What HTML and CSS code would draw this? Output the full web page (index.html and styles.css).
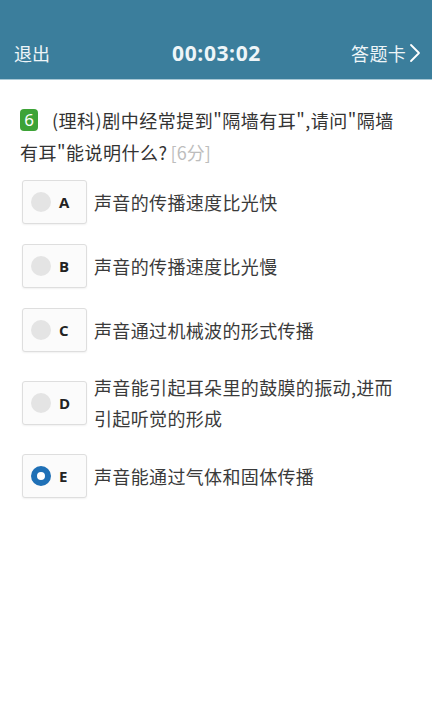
FILE: index.html
```html
<!DOCTYPE html>
<html lang="zh-CN">
<head>
<meta charset="utf-8">
<title>答题</title>
<link rel="stylesheet" href="styles.css">
</head>
<body>
<header class="topbar">
  <span class="exit">退出</span>
  <span class="timer">00:03:02</span>
  <span class="card">答题卡<svg class="chev" width="12" height="20" viewBox="0 0 12 20"><polyline points="2,2 10,10 2,18" fill="none" stroke="#ffffff" stroke-width="1.8" stroke-linecap="round" stroke-linejoin="round"/></svg></span>
</header>
<main class="content">
  <p class="question"><span class="num">6</span>(理科)剧中经常提到"隔墙有耳",请问"隔墙有耳"能说明什么?<span class="score">[6分]</span></p>
  <ul class="options">
    <li class="option"><span class="box"><span class="radio"></span><span class="letter">A</span></span><span class="text">声音的传播速度比光快</span></li>
    <li class="option"><span class="box"><span class="radio"></span><span class="letter">B</span></span><span class="text">声音的传播速度比光慢</span></li>
    <li class="option"><span class="box"><span class="radio"></span><span class="letter">C</span></span><span class="text">声音通过机械波的形式传播</span></li>
    <li class="option"><span class="box"><span class="radio"></span><span class="letter">D</span></span><span class="text">声音能引起耳朵里的鼓膜的振动,进而引起听觉的形成</span></li>
    <li class="option"><span class="box"><span class="radio checked"></span><span class="letter">E</span></span><span class="text">声音能通过气体和固体传播</span></li>
  </ul>
</main>
</body>
</html>
```

FILE: styles.css
```css
* { box-sizing: border-box; }
html, body {
  margin: 0;
  padding: 0;
  background: #ffffff;
  font-family: "Noto Sans CJK SC", "Noto Sans", sans-serif;
  color: #333333;
}
.topbar {
  height: 80px;
  background: #3b7e9c;
  border-bottom: 1px solid #a9c9d6;
  display: flex;
  align-items: flex-end;
  justify-content: space-between;
  padding: 0 11px 14px 14px;
  color: #eef5f8;
  position: relative;
}
.exit {
  font-size: 18px;
  line-height: 24px;
}
.timer {
  position: absolute;
  left: 0;
  right: 0;
  bottom: 14px;
  text-align: center;
  font-family: "Open Sans", "Noto Sans", sans-serif;
  font-weight: 700;
  font-size: 21px;
  line-height: 24px;
  letter-spacing: 0.6px;
  padding-left: 1px;
}
.card {
  font-size: 18px;
  line-height: 24px;
  display: flex;
  align-items: center;
  gap: 3px;
  letter-spacing: 0.3px;
}
.chev { display: block; }
.content {
  padding: 24px 28px 0 20px;
}
.question {
  margin: 0;
  font-size: 18px;
  line-height: 32px;
  letter-spacing: 0.5px;
  color: #333333;
}
.num {
  display: inline-block;
  width: 18px;
  height: 22px;
  line-height: 22px;
  border-radius: 4px;
  background: #3da337;
  color: #ffffff;
  text-align: center;
  font-size: 17px;
  letter-spacing: 0;
  vertical-align: 2px;
  margin-right: 14px;
  font-family: "Noto Sans", sans-serif;
}
.score {
  color: #bdbdbd;
  letter-spacing: 0;
  margin-left: 3px;
}
.options {
  list-style: none;
  margin: 12px 0 0 0;
  padding: 0;
}
.option {
  display: flex;
  align-items: center;
  margin-bottom: 20px;
  padding-left: 2px;
}
.box {
  flex: 0 0 auto;
  width: 65px;
  height: 44px;
  border: 1px solid #dedede;
  border-radius: 3px;
  background: #fbfbfb;
  box-shadow: 0 1px 2px rgba(0,0,0,0.06);
  display: flex;
  align-items: center;
  padding-left: 8px;
}
.radio {
  width: 20px;
  height: 20px;
  border-radius: 50%;
  background: #e4e4e4;
}
.radio.checked {
  background: #ffffff;
  border: 6px solid #1f70b6;
}
.letter {
  margin-left: 8px;
  font-family: "Open Sans", "Noto Sans", sans-serif;
  font-weight: 700;
  font-size: 15px;
  color: #222222;
}
.text {
  margin-left: 7px;
  font-size: 18px;
  line-height: 31px;
  letter-spacing: 0.35px;
  color: #3a3a3a;
}
```
